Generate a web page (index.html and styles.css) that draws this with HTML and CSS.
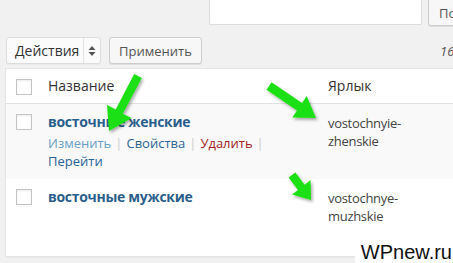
FILE: index.html
```html
<!DOCTYPE html>
<html lang="ru">
<head>
<meta charset="utf-8">
<title>Рубрики</title>
<link rel="stylesheet" href="styles.css">
</head>
<body>
<div class="page">
  <div class="search-row">
    <div class="search-input"></div>
    <button class="btn search-btn">Поиск рубрик</button>
  </div>
  <div class="tablenav">
    <div class="bulk">
      <span class="bulk-label">Действия</span>
      <span class="bulk-arrow">
        <svg width="8" height="12" viewBox="0 0 8 12"><path d="M4 1 L7.5 5 H0.5 Z M4 11 L0.5 7 H7.5 Z" fill="#555"/></svg>
      </span>
    </div>
    <button class="btn apply">Применить</button>
    <span class="count">16 элементов</span>
  </div>
  <div class="table">
    <div class="row head">
      <div class="cb-cell"><span class="cb"></span></div>
      <div class="name-cell"><span class="th">Название</span></div>
      <div class="slug-cell head-slug"><span class="th">Ярлык</span></div>
    </div>
    <div class="row alt">
      <div class="cb-cell"><span class="cb"></span></div>
      <div class="name-cell">
        <div class="title">восточные женские</div>
        <div class="actions">
          <span class="a-edit">Изменить</span><span class="sep">|</span><span class="a-link">Свойства</span><span class="sep">|</span><span class="a-del">Удалить</span><span class="sep">|</span><br><span class="a-link">Перейти</span>
        </div>
      </div>
      <div class="slug-cell">vostochnyie-<br>zhenskie</div>
    </div>
    <div class="row last">
      <div class="cb-cell"><span class="cb"></span></div>
      <div class="name-cell">
        <div class="title">восточные мужские</div>
        <div class="actions hidden">
          <span class="a-edit">Изменить</span><span class="sep">|</span><span class="a-link">Свойства</span><br><span class="a-link">Перейти</span>
        </div>
      </div>
      <div class="slug-cell">vostochnye-<br>muzhskie</div>
    </div>
  </div>
  <svg class="arrows" width="453" height="263" viewBox="0 0 453 263">
    <defs>
      <filter id="sh" x="-30%" y="-30%" width="160%" height="160%">
        <feDropShadow dx="1.5" dy="2" stdDeviation="1.5" flood-color="#000" flood-opacity="0.35"/>
      </filter>
    </defs>
    <g fill="#1ee012" filter="url(#sh)">
      <polygon points="141.8,78 122.8,113.8 131.5,118 109,131 107,105 115.7,109.5 134.2,74"/>
      <polygon points="266.5,89.7 297,110.5 292.3,117.5 316,118 306.7,96.1 302,103.1 271.5,82.3"/>
      <polygon points="288.6,177.6 298,189.9 292,194.5 311,200 310.6,180 304.6,184.7 295.4,172.4"/>
    </g>
  </svg>
  <div class="watermark">WPnew.ru</div>
</div>
</body>
</html>
```
FILE: styles.css
```css
html, body {
  margin: 0;
  padding: 0;
  background: #f1f1f1;
}
body {
  font-family: "Open Sans", "Noto Sans", sans-serif;
  color: #333;
  overflow: hidden;
}
.page {
  position: relative;
  width: 453px;
  height: 263px;
  overflow: hidden;
}
.search-row {
  display: flex;
  margin-top: -5px;
  margin-left: 209px;
  width: 400px;
  gap: 6px;
}
.search-input {
  flex: 0 0 auto;
  width: 211px;
  height: 28px;
  background: #fff;
  border: 1px solid #ddd;
  box-shadow: inset 0 1px 2px rgba(0,0,0,.07);
}
.btn {
  font-family: "Open Sans", "Noto Sans", sans-serif;
  font-size: 13px;
  color: #555;
  background: #f7f7f7;
  border: 1px solid #ccc;
  border-radius: 3px;
  box-shadow: inset 0 1px 0 #fff, 0 1px 0 rgba(0,0,0,.08);
  padding: 0 10px;
  white-space: nowrap;
  flex: 0 0 auto;
}
.search-btn {
  height: 31px;
  padding-top: 5px;
}
.tablenav {
  display: flex;
  align-items: center;
  margin-top: 11px;
  margin-left: 6px;
  height: 27px;
  width: 600px;
}
.bulk {
  flex: 0 0 auto;
  display: flex;
  align-items: stretch;
  width: 95px;
  height: 27px;
  box-sizing: border-box;
  border: 1px solid #ddd;
  border-radius: 3px;
  background: #fbfbfb;
  box-shadow: 0 1px 1px rgba(0,0,0,.04);
}
.bulk-label {
  font-size: 14px;
  line-height: 25px;
  padding-left: 8px;
  width: 68px;
  color: #333;
}
.bulk-arrow {
  flex: 1;
  display: flex;
  align-items: center;
  justify-content: center;
  border-left: 1px solid #e4e4e4;
}
.apply {
  height: 27px;
  margin-left: 8px;
  width: 93px;
  padding: 0;
}
.count {
  flex: 0 0 auto;
  margin-left: 238px;
  font-size: 13px;
  font-style: italic;
  color: #555;
  white-space: nowrap;
}
.table {
  margin-top: 4px;
  margin-left: 5px;
  width: 470px;
  background: #fff;
  border: 1px solid #e5e5e5;
  box-shadow: 0 1px 1px rgba(0,0,0,.04);
}
.row {
  display: grid;
  grid-template-columns: 35px 280px 1fr;
  padding: 8px 0 9px;
}
.row.last {
  padding-bottom: 11px;
}
.row.alt {
  background: #f9f9f9;
}
.row.head {
  height: 34px;
  box-sizing: content-box;
  padding: 0;
  border-bottom: 1px solid #e1e1e1;
}
.cb-cell {
  padding-left: 10px;
}
.cb {
  display: block;
  width: 14px;
  height: 14px;
  border: 1px solid #c4c4c4;
  background: #fff;
  box-shadow: inset 0 1px 2px rgba(0,0,0,.08);
  margin-top: 2px;
}
.head .cb {
  margin-top: 10px;
}
.name-cell, .slug-cell {
  padding-left: 7px;
}
.th {
  display: block;
  font-size: 14px;
  line-height: 20px;
  padding-top: 7px;
  color: #333;
}
.title {
  font-size: 14px;
  font-weight: 700;
  line-height: 20px;
  letter-spacing: -0.3px;
  color: #2b5e8b;
}
.actions {
  margin-top: 2px;
  font-size: 13px;
  line-height: 18px;
}
.actions.hidden {
  visibility: hidden;
}
.a-edit { color: #6a9fc6; }
.a-link { color: #2a6595; }
.a-del { color: #a31d1d; }
.sep {
  color: #ccc;
  padding: 0 4px;
}
.slug-cell {
  font-size: 13px;
  line-height: 18px;
  letter-spacing: -0.3px;
  color: #444;
  padding-top: 2px;
}
.head-slug {
  padding-top: 0;
  letter-spacing: 0;
}
.arrows {
  position: absolute;
  left: 0;
  top: 0;
}
.watermark {
  position: absolute;
  right: 0;
  bottom: 0;
  background: #fff;
  font-family: "Liberation Sans", Arial, sans-serif;
  font-size: 20px;
  line-height: 22px;
  color: #111;
  padding: 2px 1px 0 6px;
}
```
